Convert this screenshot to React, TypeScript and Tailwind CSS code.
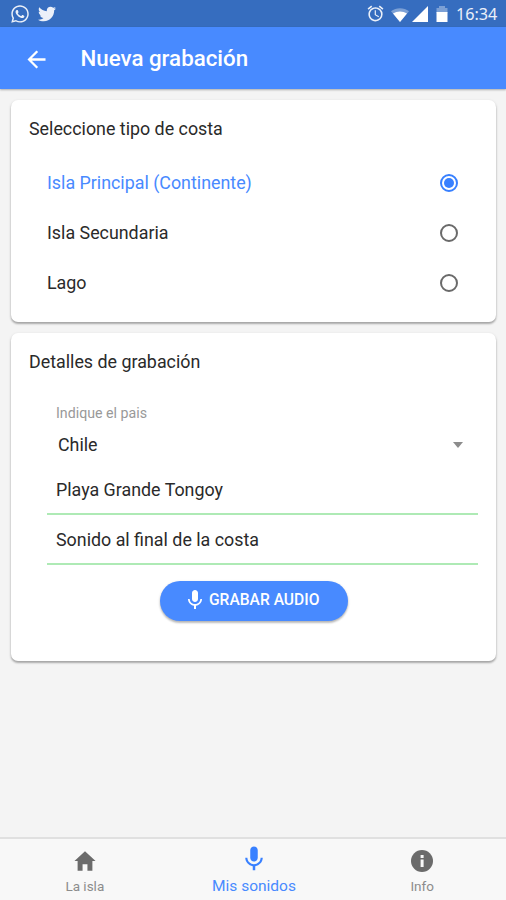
import type { ReactNode } from "react";
import { MdAlarm, MdMic } from "react-icons/md";
import { IoMdArrowBack, IoMdHome } from "react-icons/io";
import { FaTwitter, FaWhatsapp } from "react-icons/fa";

function StatusBar() {
  return (
    <div className="flex h-[27px] shrink-0 items-center bg-[#366dbf] text-white/90">
      <FaWhatsapp className="ml-[10px] size-[20px]" />
      <FaTwitter className="ml-[8px] size-[18px]" />
      <MdAlarm className="ml-auto size-[19px]" />
      <svg viewBox="0 0 18 14" className="mt-[2px] ml-[6px] h-[14px] w-[18px]">
        <path d="M9 14 0 3.2C5 -.9 13 -.9 18 3.2z" fill="#fff" fillOpacity=".35" />
        <path d="M9 14 2 5.5C6 2.8 12 2.8 16 5.5z" fill="#fff" />
      </svg>
      <svg viewBox="0 0 16 16" className="ml-[3px] size-[16px]">
        <path d="M16 0v16H0z" fill="#fff" />
      </svg>
      <svg viewBox="0 0 12 16" className="ml-[8px] h-[16px] w-[12px]">
        <path d="M3 0h6v2h2.5v5H.5V2H3z" fill="#fff" fillOpacity=".35" />
        <path d="M.5 6h11v10H.5z" fill="#fff" />
      </svg>
      <span className="mt-[2px] mr-[8px] ml-[8px] w-[42px] font-['Noto_Sans',sans-serif] text-[16.2px] leading-none whitespace-nowrap">
        16:34
      </span>
    </div>
  );
}

function Card({ title, className, children }: { title: string; className: string; children: ReactNode }) {
  return (
    <section
      className={`mr-[10px] ml-[11px] flex shrink-0 flex-col rounded-[7px] bg-white shadow-[0_2px_2px_0_rgba(0,0,0,0.24),0_1px_3px_0_rgba(0,0,0,0.16)] ${className}`}
    >
      <h2 className="pt-[18px] pl-[18px] text-[17.85px] leading-[22px] text-[#2a2a2a]">{title}</h2>
      {children}
    </section>
  );
}

function RadioRow({ label, checked = false }: { label: string; checked?: boolean }) {
  return (
    <div
      className={`flex h-[50px] items-center justify-between pr-[38px] pl-[36px] text-[17.85px] ${checked ? "text-[#488aff]" : "text-[#2a2a2a]"}`}
    >
      <span className="leading-[26px]">{label}</span>
      <span
        className={`flex size-[18px] items-center justify-center rounded-full border-2 ${checked ? "border-[#3880ff]" : "border-[#6a6a6a]"}`}
      >
        {checked && <span className="size-[10px] rounded-full bg-[#3880ff]" />}
      </span>
    </div>
  );
}

export default function App() {
  return (
    <div className="flex h-[900px] w-[506px] flex-col overflow-hidden bg-[#f4f4f4] font-[Roboto,sans-serif]">
      <StatusBar />
      <header className="flex h-[62px] shrink-0 items-center bg-[#488aff] text-white shadow-[0_1px_2px_rgba(0,0,0,0.3)]">
        <IoMdArrowBack className="mt-[2px] ml-[23px] size-[27px]" />
        <h1 className="ml-[30.5px] text-[22.3px] leading-[32px] font-medium">Nueva grabación</h1>
      </header>

      <Card title="Seleccione tipo de costa" className="mt-[11px] h-[222px]">
        <div className="mt-[18px]">
          <RadioRow label="Isla Principal (Continente)" checked />
          <RadioRow label="Isla Secundaria" />
          <RadioRow label="Lago" />
        </div>
      </Card>

      <Card title="Detalles de grabación" className="mt-[11px] h-[328px]">
        <div className="mt-[32px] mr-[18px] ml-[36px] text-[17.85px] leading-[26px] text-[#2a2a2a]">
          <label className="block pl-[9px] text-[14.2px] leading-[16px] text-[#999]">Indique el pais</label>
          <div className="flex h-[47px] items-center justify-between pr-[15px] pl-[11px]">
            <span className="pt-px">Chile</span>
            <span className="border-x-[5.5px] border-t-[6px] border-x-transparent border-t-[#8c8c8c]" />
          </div>
          <div className="flex h-[47px] items-center border-b-2 border-[#aeeab5] pb-[2px] pl-[9px]">
            Playa Grande Tongoy
          </div>
          <div className="flex h-[50px] items-center border-b-2 border-[#aeeab5] pt-px pl-[9px]">
            Sonido al final de la costa
          </div>
        </div>
        <button className="mt-[16px] ml-[149px] flex h-[40px] w-[188px] items-center rounded-full bg-[#488aff] pl-[23px] text-[15.6px] font-medium text-white shadow-[0_2px_2px_rgba(0,0,0,0.2),0_1px_3px_rgba(0,0,0,0.15)]">
          <MdMic className="mb-[2px] size-[24px]" />
          <span className="ml-[2px] whitespace-nowrap">GRABAR AUDIO</span>
        </button>
      </Card>

      <nav className="mt-auto grid h-[63px] shrink-0 grid-cols-3 border-t-2 border-[#e0e0e0] bg-[#f8f8f8] text-[#8c8c8c]">
        <div className="flex flex-col items-center pt-[9px] pl-[1px]">
          <IoMdHome className="size-[26px] text-[#6b6b6b]" />
          <span className="mt-[4px] text-[13.5px] leading-[16px]">La isla</span>
        </div>
        <div className="flex flex-col items-center pt-[5px] pl-[2px] text-[#488aff]">
          <MdMic className="size-[30px] text-[#3880ff]" />
          <span className="mt-[3px] text-[15.5px] leading-[18px]">Mis sonidos</span>
        </div>
        <div className="flex flex-col items-center pt-[9px] pl-[1px]">
          <svg viewBox="0 0 26 26" className="size-[26px]">
            <circle cx="13" cy="13" r="11" fill="#6b6b6b" />
            <path d="M11.6 7h3v3h-3zM11.6 11.6h3v7.4h-3z" fill="#f8f8f8" />
          </svg>
          <span className="mt-[4px] text-[13.5px] leading-[16px]">Info</span>
        </div>
      </nav>
    </div>
  );
}
